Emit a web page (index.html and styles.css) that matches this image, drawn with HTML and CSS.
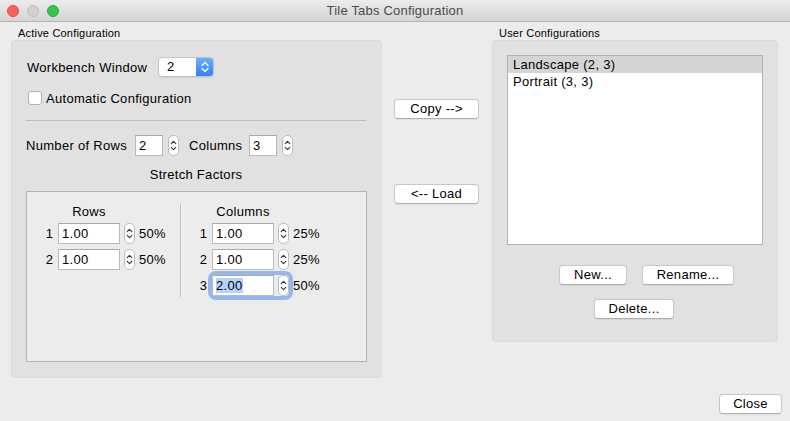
FILE: index.html
```html
<!DOCTYPE html>
<html>
<head>
<meta charset="utf-8">
<title>Tile Tabs Configuration</title>
<link rel="stylesheet" href="styles.css">
</head>
<body>
<div class="titlebar">
  <div class="lights"><span class="light red"></span><span class="light gray"></span><span class="light green"></span></div>
  <div class="title">Tile Tabs Configuration</div>
  <div></div>
</div>
<div class="main">
  <div class="col-left">
    <div class="group-label">Active Configuration</div>
    <div class="group active">
      <div class="row wb">
        <span class="lbl-wb">Workbench Window</span>
        <div class="popup">
          <span class="popup-val">2</span>
          <span class="popup-arrows"><svg width="18" height="20" viewBox="0 0 18 20"><path d="M6 8.5 L9 5.5 L12 8.5 M6 11.5 L9 14.5 L12 11.5" fill="none" stroke="#fff" stroke-width="1.4" stroke-linecap="round" stroke-linejoin="round"/></svg></span>
        </div>
      </div>
      <div class="row auto"><span class="checkbox"></span><span>Automatic Configuration</span></div>
      <div class="sep"></div>
      <div class="row dims">
        <span class="lbl-rows">Number of Rows</span>
        <div class="field small">2</div>
        <span class="stepper"><svg width="11" height="21" viewBox="0 0 11 21"><path d="M3.2 8.6 L5.5 6.3 L7.8 8.6 M3.2 12.4 L5.5 14.7 L7.8 12.4" fill="none" stroke="#333" stroke-width="1.1" stroke-linecap="round" stroke-linejoin="round"/></svg></span>
        <span class="lbl-cols">Columns</span>
        <div class="field small">3</div>
        <span class="stepper"><svg width="11" height="21" viewBox="0 0 11 21"><path d="M3.2 8.6 L5.5 6.3 L7.8 8.6 M3.2 12.4 L5.5 14.7 L7.8 12.4" fill="none" stroke="#333" stroke-width="1.1" stroke-linecap="round" stroke-linejoin="round"/></svg></span>
      </div>
      <div class="stretch-label">Stretch Factors</div>
      <div class="inner">
        <div class="scol rcol">
          <div class="head">Rows</div>
          <div class="srow"><span class="num">1</span><div class="spin"><div class="field">1.00</div><span class="stepper"><svg width="11" height="21" viewBox="0 0 11 21"><path d="M3.2 8.6 L5.5 6.3 L7.8 8.6 M3.2 12.4 L5.5 14.7 L7.8 12.4" fill="none" stroke="#333" stroke-width="1.1" stroke-linecap="round" stroke-linejoin="round"/></svg></span></div><span class="pct">50%</span></div>
          <div class="srow"><span class="num">2</span><div class="spin"><div class="field">1.00</div><span class="stepper"><svg width="11" height="21" viewBox="0 0 11 21"><path d="M3.2 8.6 L5.5 6.3 L7.8 8.6 M3.2 12.4 L5.5 14.7 L7.8 12.4" fill="none" stroke="#333" stroke-width="1.1" stroke-linecap="round" stroke-linejoin="round"/></svg></span></div><span class="pct">50%</span></div>
        </div>
        <div class="divider"></div>
        <div class="scol ccol">
          <div class="head">Columns</div>
          <div class="srow"><span class="num">1</span><div class="spin"><div class="field">1.00</div><span class="stepper"><svg width="11" height="21" viewBox="0 0 11 21"><path d="M3.2 8.6 L5.5 6.3 L7.8 8.6 M3.2 12.4 L5.5 14.7 L7.8 12.4" fill="none" stroke="#333" stroke-width="1.1" stroke-linecap="round" stroke-linejoin="round"/></svg></span></div><span class="pct">25%</span></div>
          <div class="srow"><span class="num">2</span><div class="spin"><div class="field">1.00</div><span class="stepper"><svg width="11" height="21" viewBox="0 0 11 21"><path d="M3.2 8.6 L5.5 6.3 L7.8 8.6 M3.2 12.4 L5.5 14.7 L7.8 12.4" fill="none" stroke="#333" stroke-width="1.1" stroke-linecap="round" stroke-linejoin="round"/></svg></span></div><span class="pct">25%</span></div>
          <div class="srow"><span class="num">3</span><div class="spin focus"><div class="field"><span class="sel">2.00</span></div><span class="stepper"><svg width="11" height="21" viewBox="0 0 11 21"><path d="M3.2 8.6 L5.5 6.3 L7.8 8.6 M3.2 12.4 L5.5 14.7 L7.8 12.4" fill="none" stroke="#333" stroke-width="1.1" stroke-linecap="round" stroke-linejoin="round"/></svg></span></div><span class="pct">50%</span></div>
        </div>
      </div>
    </div>
  </div>
  <div class="col-mid">
    <button class="btn copy">Copy --&gt;</button>
    <button class="btn load">&lt;-- Load</button>
  </div>
  <div class="col-right">
    <div class="group-label user-label">User Configurations</div>
    <div class="group user">
      <div class="list">
        <div class="item selected">Landscape (2, 3)</div>
        <div class="item">Portrait (3, 3)</div>
      </div>
      <div class="btnrow">
        <button class="btn new">New...</button>
        <button class="btn rename">Rename...</button>
      </div>
      <div class="btnrow del">
        <button class="btn delete">Delete...</button>
      </div>
    </div>
  </div>
</div>
<div class="footer">
  <button class="btn close">Close</button>
</div>
</body>
</html>
```

FILE: styles.css
```css
* { box-sizing: border-box; }
html, body { margin: 0; padding: 0; }
body {
  width: 790px;
  height: 421px;
  overflow: hidden;
  background: #ececec;
  font-family: "Liberation Sans", Arial, sans-serif;
  font-size: 13px;
  letter-spacing: 0.3px;
  color: #000;
}

.titlebar {
  height: 22px;
  display: grid;
  grid-template-columns: 1fr auto 1fr;
  align-items: center;
  background: linear-gradient(#ececec, #d4d4d4);
  border-bottom: 1px solid #b4b4b4;
}
.lights { display: flex; gap: 8px; padding-left: 7px; }
.light { width: 12px; height: 12px; border-radius: 50%; }
.red { background: #fc605b; border: 1px solid #de4b46; }
.gray { background: #d0d0d0; border: 1px solid #bdbdbd; }
.green { background: #34c84a; border: 1px solid #28a93a; }
.title { color: #4b4b4b; font-size: 13px; letter-spacing: 0.2px; }

.main { display: flex; padding-left: 11px; }
.col-left { width: 371px; }
.group-label {
  font-size: 11px;
  line-height: 14px;
  height: 18px;
  padding: 4px 0 0 7px;
  letter-spacing: 0.2px;
}
.group {
  background: #e1e1e1;
  border: 1px solid #dadada;
  border-radius: 4px;
}
.active { height: 338px; padding: 16px 15px 0 14px; }

.row { display: flex; align-items: center; }
.wb { height: 20px; margin-left: 1px; }
.lbl-wb { width: 131px; }
.popup {
  width: 56px;
  height: 20px;
  display: flex;
  background: #fff;
  border: 1px solid #c4c4c4;
  border-radius: 4px;
  box-shadow: 0 1px 1px rgba(0,0,0,0.08);
  overflow: hidden;
}
.popup-val { flex: 1; padding-left: 8px; line-height: 18px; }
.popup-arrows {
  width: 18px;
  background: linear-gradient(#6cb0fa, #2f7ef5);
  display: flex;
  align-items: center;
  justify-content: center;
  margin: -1px -1px -1px 0;
}

.auto { margin-top: 14px; height: 14px; margin-left: 2px; gap: 4px; }
.checkbox {
  width: 14px;
  height: 14px;
  background: #fff;
  border: 1px solid #b2b2b2;
  border-radius: 3px;
}

.sep { margin-top: 15px; height: 1px; width: 340px; background: #bcbcbc; }

.dims { margin-top: 14px; height: 21px; }
.lbl-rows { width: 109px; }
.lbl-cols { width: 60px; margin-left: 10px; }
.field {
  width: 62px;
  height: 21px;
  background: #fff;
  border: 1px solid #bababa;
  border-top-color: #a9a9a9;
  padding-left: 3px;
  line-height: 19px;
}
.field.small { width: 28px; }
.stepper {
  width: 11px;
  height: 21px;
  margin-left: 5px;
  background: #fff;
  border: 1px solid #bdbdbd;
  border-radius: 5px;
  display: flex;
  align-items: center;
  justify-content: center;
  overflow: hidden;
}
.stepper svg { flex: none; }

.stretch-label { margin-top: 11px; line-height: 16px; width: 340px; text-align: center; }

.inner {
  margin-top: 8px;
  width: 341px;
  height: 171px;
  border: 1px solid #b3b3b3;
  background: #ececec;
  display: flex;
  padding: 12px 0 0 16px;
}
.rcol { width: 137px; }
.ccol { padding-left: 15px; }
.divider {
  width: 2px;
  height: 93px;
  border-left: 1px solid #bdbdbd;
  border-right: 1px solid #f6f6f6;
}
.head {
  width: 77px;
  padding-left: 15px;
  text-align: center;
  line-height: 16px;
  margin-bottom: 3px;
}
.srow { display: flex; align-items: center; height: 21px; margin-bottom: 5px; }
.num { width: 10px; text-align: right; margin-right: 5px; letter-spacing: 0; }
.spin { display: flex; }
.spin .stepper { margin-left: 4px; }
.pct { margin-left: 4px; }
.focus {
  border-radius: 4px;
  box-shadow: 0 0 0 4px rgba(120, 165, 238, 0.75);
}
.sel { background: #b3d4fc; }

.col-mid { width: 85px; margin-left: 12px; padding-top: 77px; display: flex; flex-direction: column; }
.btn {
  font-family: inherit;
  font-size: 13px;
  letter-spacing: 0.3px;
  color: #000;
  height: 20px;
  padding: 0;
  background: #fff;
  border: 1px solid #c8c8c8;
  border-bottom-color: #aeaeae;
  border-radius: 4px;
  box-shadow: 0 0.5px 1px rgba(0,0,0,0.06);
  line-height: 18px;
}
.copy, .load { width: 85px; }
.load { margin-top: 65px; }

.col-right { width: 286px; margin-left: 13px; }
.user { height: 302px; padding: 14px 14px 0 14px; }
.list {
  width: 256px;
  height: 190px;
  background: #fff;
  border: 1px solid #b1b1b1;
}
.item { height: 17px; line-height: 17px; padding-left: 5px; }
.selected { background: #d5d5d5; }
.btnrow { display: flex; gap: 15px; margin-top: 20px; padding-left: 52px; }
.btnrow.del { margin-top: 14px; padding-left: 87px; }
.new { width: 68px; }
.rename { width: 92px; }
.delete { width: 80px; }

.footer { display: flex; justify-content: flex-end; padding: 16px 8px 0 0; }
.close { width: 63px; }
```
